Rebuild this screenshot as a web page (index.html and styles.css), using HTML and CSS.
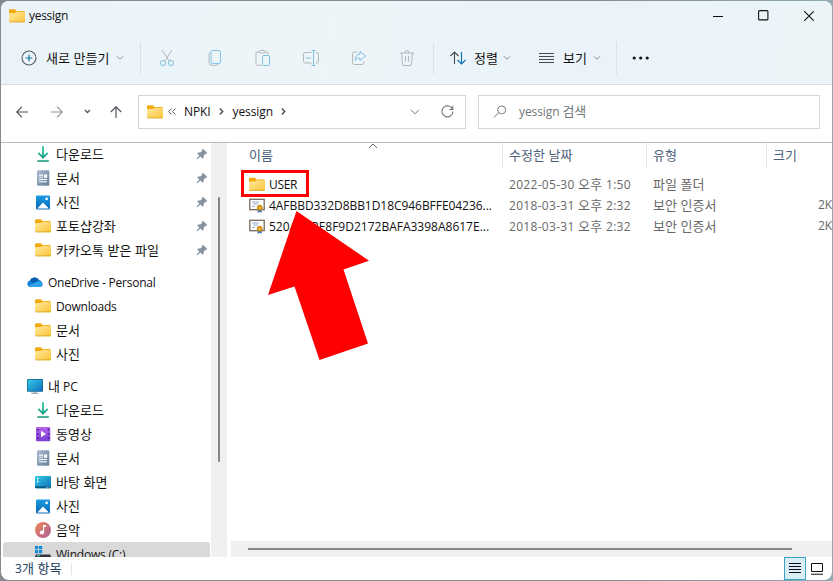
FILE: index.html
```html
<!DOCTYPE html>
<html lang="ko">
<head>
<meta charset="utf-8">
<title>yessign</title>
<link rel="stylesheet" href="styles.css">
</head>
<body>
<svg class="defs" width="0" height="0">
  <defs>
    <linearGradient id="gFolder" x1="0" y1="0" x2="1" y2="1"><stop offset="0" stop-color="#ffe9a3"/><stop offset="1" stop-color="#fbc536"/></linearGradient>
    <linearGradient id="gDown" x1="0" y1="0" x2="0" y2="1"><stop offset="0" stop-color="#28c3a0"/><stop offset="1" stop-color="#109477"/></linearGradient>
    <linearGradient id="gDoc" x1="0" y1="0" x2="1" y2="1"><stop offset="0" stop-color="#a9bace"/><stop offset="1" stop-color="#667f9b"/></linearGradient>
    <linearGradient id="gPic" x1="0" y1="0" x2="0" y2="1"><stop offset="0" stop-color="#199ae0"/><stop offset="1" stop-color="#0a67ba"/></linearGradient>
    <linearGradient id="gPc" x1="0" y1="0" x2="1" y2="1"><stop offset="0" stop-color="#35cbe4"/><stop offset="1" stop-color="#0b70bd"/></linearGradient>
    <linearGradient id="gVid" x1="0" y1="0" x2="0" y2="1"><stop offset="0" stop-color="#b463e8"/><stop offset="1" stop-color="#7c3fd4"/></linearGradient>
    <linearGradient id="gMus" x1="0" y1="0" x2="1" y2="1"><stop offset="0" stop-color="#ef8a52"/><stop offset="1" stop-color="#ab5b9e"/></linearGradient>
    <symbol id="folder" viewBox="0 0 16 14"><path d="M0 1.400Q0 .3 1.100.3h4.400q.7 0 1.200.6l1 1.200h7.200q1.100 0 1.100 1v3H0z" fill="#f2a90c"/><path d="M0 5q0-.9 1-.9h4.400q.6 0 1.100-.5l.8-.8h7.700q1 0 1 1v8.400q0 1-1 1H1q-1 0-1-1z" fill="url(#gFolder)"/><path d="M.4 12.900h15.200" stroke="#d69b20" stroke-width=".7"/></symbol>
    <symbol id="download" viewBox="0 0 16 16"><path d="M7.100.3h1.800v9.200l3.200-3.200 1.200 1.300L8 12.900 2.700 7.600l1.200-1.300 3.200 3.200zM2.200 14.300h11.600v1.500H2.200z" fill="url(#gDown)"/></symbol>
    <symbol id="doc" viewBox="0 0 16 16"><rect x="2" y=".3" width="12.300" height="15.400" rx="1" fill="url(#gDoc)"/><path d="M4 5.100h4M4 7.300h4M4 9.500h8M4 11.700h8" stroke="#fff" stroke-width="1.100"/><rect x="9" y="4.500" width="3.200" height="3.200" fill="#fff"/></symbol>
    <symbol id="picture" viewBox="0 0 16 16"><rect x="1" y="1.500" width="14" height="14" rx="1" fill="url(#gPic)"/><path d="M2.300 14.500 8 8.500l6 6z" fill="#fff"/><circle cx="11.600" cy="4.900" r="1.300" fill="#fff"/></symbol>
    <symbol id="onedrive" viewBox="0 0 16 11"><path d="M3.300 10.500A3.300 3.300 0 0 1 3 4a5 5 0 0 1 9-.4A3.600 3.600 0 0 1 13 10.500z" fill="#1580d4"/><path d="M3 4a5 5 0 0 1 9-.5L6 7z" fill="#0a5cb0"/><path d="M1.500 9.500 9.800 5.200q5.800-.3 6.100 2.700-.1 2.500-2.700 2.700H3.500q-1.300 0-2-1.100" fill="#2da3ec"/></symbol>
    <symbol id="pc" viewBox="0 0 16 16"><path d="M7.300 13.500h1.400v1.300h2.600v.9H4.200v-.9h3.100z" fill="#84929d"/><rect y="1" width="16" height="12.800" rx="1" fill="#17618f"/><rect x=".7" y="1.700" width="14.600" height="11.400" fill="url(#gPc)"/></symbol>
    <symbol id="video" viewBox="0 0 16 16"><rect x="1" y="1" width="14.300" height="14.300" rx="1" fill="url(#gVid)"/><path d="M6 4.800v6.400l5-3.200z" fill="#fff"/><path d="M2.900 3v11M13.500 3v11" stroke="#4c168c" stroke-width="1.500" stroke-dasharray="1.600 2.600"/></symbol>
    <symbol id="desktop" viewBox="0 0 16 16"><rect y="2" width="16" height="12.200" rx="1" fill="url(#gPc)"/><path d="M0 12.200h16v1q0 1-1 1H1q-1 0-1-1z" fill="#0a5a88"/><path d="M2 4.600h1.500M2 7.600h1.500" stroke="#fff" stroke-width="1.500"/><path d="M11 13.200h3.500" stroke="#d9f3ff" stroke-width=".8" stroke-dasharray=".8 .6"/></symbol>
    <symbol id="music" viewBox="0 0 16 16"><circle cx="8" cy="8" r="8" fill="url(#gMus)"/><path d="M8 3h3v2H9.100v5.500a2.100 1.900 0 1 1-1.100-1.700z" fill="#fff"/></symbol>
    <symbol id="drive" viewBox="0 0 16 16"><path d="M0 0h3.200v3.200H0zM4 0h3.200v3.200H4zM0 4h3.200v3.200H0zM4 4h3.200v3.200H4z" fill="#128ad5"/><path d="M1 8.500h14l1 2v4H0v-4z" fill="#343a3f"/><path d="M2 9.800h3" stroke="#3cd6b4"/></symbol>
    <symbol id="pin" viewBox="0 0 12 12"><path d="m7 .7 4.300 4.200-1.100 1-.6-.1-2 2v2.100l-.9.9-2.200-2.200L1 11.500l-.5-.5 2.800-3.500-2.100-2.100.9-1h2.200l2.100-2-.3-.7z" fill="#85919c"/></symbol>
    <symbol id="chev" viewBox="0 0 8 6"><path d="m1 1.300 3 3 3-3" fill="none" stroke="currentColor"/></symbol>
    <symbol id="cert" viewBox="0 0 16 15"><rect x=".8" y="1.300" width="14.400" height="10.400" fill="#fff" stroke="#776b5c" stroke-width="1.300"/><path d="M3 4h7M4 6h5M3 8.500h3" stroke="#8ba4c2" stroke-width=".9"/><path d="M8.700 11v4l1.900-1.500 1.900 1.500v-4" fill="#245dba"/><circle cx="10.700" cy="9.700" r="2.900" fill="#cf9318"/><circle cx="10.700" cy="9.700" r="1" fill="#f3c84c"/></symbol>
  </defs>
</svg>
<div class="window">
  <header class="top">
    <div class="titlebar">
      <svg class="folder"><use href="#folder"/></svg><span class="title">yessign</span>
      <div class="controls">
        <svg width="10" height="10"><path d="M0 5.500h10" stroke="#111"/></svg>
        <svg width="11" height="11"><rect x=".6" y=".6" width="9.300" height="9.300" rx="1" fill="none" stroke="#111" stroke-width="1.100"/></svg>
        <svg width="10" height="10"><path d="m.2.2 9.600 9.600m0-9.600L.2 9.800" stroke="#111" stroke-width="1.100"/></svg>
      </div>
    </div>
    <div class="toolbar">
      <button class="tool new"><svg width="16" height="16" fill="none"><circle cx="8" cy="8" r="7" stroke="#555d63" stroke-width="1.100"/><path d="M8 4.700v6.600M4.700 8h6.600" stroke="#1272a8" stroke-width="1.200"/></svg><span class="ko">새로 만들기</span><svg class="chev"><use href="#chev"/></svg></button>
      <i class="sep"></i>
      <div class="actions">
        <svg viewBox="0 0 16 16"><path d="m3 0 7.500 11.500M13 0 5.500 11.500" stroke="#b2b9bd"/><circle cx="4" cy="13" r="2.600" stroke="#7fc0e5"/><circle cx="12" cy="13" r="2.600" stroke="#7fc0e5"/></svg>
        <svg viewBox="0 0 16 16"><path d="M3.500 2.500q-1.500.4-1.500 2V12q0 3.300 3.300 3.300h3.500q1.600 0 2-1.300" stroke="#b2b9bd"/><rect x="4" y=".5" width="9.500" height="13" rx="1.600" stroke="#7fc0e5"/></svg>
        <svg viewBox="0 0 16 16"><path d="M5 2H2Q1 2 1 3v11.300q0 1 1 1h4.500M10 2h2q1 0 1 1v1.500" stroke="#b2b9bd"/><rect x="4.500" y=".5" width="6" height="2.500" rx="1" stroke="#b2b9bd"/><rect x="7.500" y="5.500" width="7" height="10" rx="1" stroke="#7fc0e5"/></svg>
        <svg viewBox="0 0 16 16"><path d="M8.500 2.500H2.200Q.5 2.500.5 4.200v7.100q0 1.700 1.700 1.700h6.300m4-10.500h1.300q1.700 0 1.700 1.700v7.100q0 1.700-1.700 1.700h-1.300" stroke="#b2b9bd"/><path d="M8.500.5h4m-2 0v15m-2 0h4M3 8h5" stroke="#7fc0e5"/></svg>
        <svg viewBox="0 0 16 16"><path d="M6 2H3Q1.500 2 1.500 3.500v9q0 2 2 2H11q2 0 2-2V11" stroke="#b2b9bd"/><path d="M9 1.300 14.500 6 9 10.500V8q-3-.5-5 2.500Q4.500 4 9 4z" stroke="#7fc0e5"/></svg>
        <svg viewBox="0 0 16 16"><path d="M1 3h14M2.500 3l1 11q.1 1.500 1.500 1.500h6q1.400 0 1.500-1.500l1-11M6 3V2q0-1.400 2-1.400T10 2v1M6.500 6v6M9.500 6v6" stroke="#b2b9bd"/></svg>
      </div>
      <i class="sep s2"></i>
      <button class="tool sort"><svg width="16" height="14" fill="none"><path d="M4.500 13V1M.5 5l4-4 4 4" stroke="#444c52" stroke-width="1.100"/><path d="M11.500 1v12m-4-4 4 4 4-4" stroke="#1172b8" stroke-width="1.200"/></svg><span class="ko">정렬</span><svg class="chev"><use href="#chev"/></svg></button>
      <button class="tool view"><svg width="15" height="11"><path d="M0 .5h15M0 3.500h15M0 6.500h15M0 9.500h15" stroke="#444c52"/></svg><span class="ko">보기</span><svg class="chev"><use href="#chev"/></svg></button>
      <i class="sep s3"></i>
      <svg class="more" width="18" height="4"><circle cx="2.200" cy="2" r="1.600"/><circle cx="8.700" cy="2" r="1.600"/><circle cx="15.200" cy="2" r="1.600"/></svg>
    </div>
  </header>
  <nav class="navbar">
    <svg class="back" width="12" height="12" fill="none"><path d="M12 6H.8M6 .7.800 6 6 11.300" stroke="#50565b" stroke-width="1.200"/></svg>
    <svg class="fwd" width="12" height="12" fill="none"><path d="M0 6h11.200M6 .7 11.200 6 6 11.300" stroke="#94999c" stroke-width="1.200"/></svg>
    <svg class="recent" width="7" height="5" fill="none"><path d="m1 1 2.500 2.500L6 1" stroke="#50565b" stroke-width="1.300"/></svg>
    <svg class="up" width="12" height="12" fill="none"><path d="M6 12V.8M.8 6 6 .8 11.200 6" stroke="#50565b" stroke-width="1.200"/></svg>
    <div class="address">
      <svg class="folder"><use href="#folder"/></svg>
      <svg class="dbl" width="8" height="7" fill="none"><path d="m3.800.5-3 3 3 3m3.700-6-3 3 3 3" stroke="#50565b"/></svg>
      <span class="c1">NPKI</span><svg class="arr" width="5" height="7" fill="none"><path d="m.8.5 3 3-3 3" stroke="#444" stroke-width="1.300"/></svg>
      <span class="c2">yessign</span><svg class="arr" width="5" height="7" fill="none"><path d="m.8.5 3 3-3 3" stroke="#444" stroke-width="1.300"/></svg>
      <svg class="drop" width="10" height="6" fill="none"><path d="m1 .8 4 4 4-4" stroke="#6f7478"/></svg>
      <svg class="refresh" width="13" height="13" fill="none"><path d="M11.600 4.300A5.500 5.500 0 1 0 12 6.500M11.800.7v3.800H8.200" stroke="#6f7478" stroke-width="1.100"/></svg>
    </div>
    <div class="search"><svg width="14" height="13" fill="none"><circle cx="8.700" cy="4.900" r="4" stroke="#777d81"/><path d="M5.700 7.900.8 12.400" stroke="#777d81"/></svg><span>yessign <b class="ko">검색</b></span></div>
  </nav>
  <main class="content">
    <aside class="side">
      <div class="tree">
        <div class="item"><svg><use href="#download"/></svg><span class="ko">다운로드</span><svg class="pin"><use href="#pin"/></svg></div>
        <div class="item"><svg><use href="#doc"/></svg><span class="ko">문서</span><svg class="pin"><use href="#pin"/></svg></div>
        <div class="item"><svg><use href="#picture"/></svg><span class="ko">사진</span><svg class="pin"><use href="#pin"/></svg></div>
        <div class="item"><svg><use href="#folder"/></svg><span class="ko">포토샵강좌</span><svg class="pin"><use href="#pin"/></svg></div>
        <div class="item"><svg><use href="#folder"/></svg><span class="ko">카카오톡 받은 파일</span><svg class="pin"><use href="#pin"/></svg></div>
        <div class="item root"><svg><use href="#onedrive"/></svg><span class="latin">OneDrive - Personal</span></div>
        <div class="item"><svg><use href="#folder"/></svg><span class="latin">Downloads</span></div>
        <div class="item"><svg><use href="#folder"/></svg><span class="ko">문서</span></div>
        <div class="item"><svg><use href="#folder"/></svg><span class="ko">사진</span></div>
        <div class="item root"><svg><use href="#pc"/></svg><span><b class="ko">내</b> PC</span></div>
        <div class="item"><svg><use href="#download"/></svg><span class="ko">다운로드</span></div>
        <div class="item"><svg><use href="#video"/></svg><span class="ko">동영상</span></div>
        <div class="item"><svg><use href="#doc"/></svg><span class="ko">문서</span></div>
        <div class="item"><svg><use href="#desktop"/></svg><span class="ko">바탕 화면</span></div>
        <div class="item"><svg><use href="#picture"/></svg><span class="ko">사진</span></div>
        <div class="item"><svg><use href="#music"/></svg><span class="ko">음악</span></div>
        <div class="item selected"><svg><use href="#drive"/></svg><span class="latin">Windows (C:)</span></div>
      </div>
      <div class="vscroll"><i></i></div>
    </aside>
    <section class="files">
      <div class="row head ko"><span class="name">이름</span><span>수정한 날짜</span><span>유형</span><span>크기</span><svg class="asc" width="10" height="6" fill="none"><path d="m1 5 4-4 4 4" stroke="#666"/></svg></div>
      <div class="rows">
        <div class="row"><span class="name"><svg><use href="#folder"/></svg><em class="user">USER</em></span><span class="date">2022-05-30 <b class="ko">오후</b> 1:50</span><span class="ko">파일 폴더</span><span></span></div>
        <div class="row"><span class="name"><svg><use href="#cert"/></svg><em class="n1">4AFBBD332D8BB1D18C946BFFE04236...</em></span><span class="date">2018-03-31 <b class="ko">오후</b> 2:32</span><span class="ko">보안 인증서</span><span class="size">2KB</span></div>
        <div class="row"><span class="name"><svg><use href="#cert"/></svg><em class="n2">520A10BE8F9D2172BAFA3398A8617E...</em></span><span class="date">2018-03-31 <b class="ko">오후</b> 2:32</span><span class="ko">보안 인증서</span><span class="size">2KB</span></div>
      </div>
      <div class="hscroll"><i></i></div>
      <div class="highlight"></div>
      <svg class="pointer" width="102" height="150"><path d="M28.500 0 101 49.700 75.500 58.500 100 132.500 51.500 149 26.500 75.500 0 84z" fill="#f00"/></svg>
    </section>
  </main>
  <footer class="status">
    <span>3<b class="ko">개 항목</b></span><i></i>
    <div class="modes"><div class="on"><svg width="12" height="11"><path d="M0 .5h12M0 3.500h12M0 6.500h12M0 9.500h12" stroke="#111"/></svg></div><svg width="12" height="12" fill="none"><path d="M.5.5h11v8H.5zM0 11.200h12" stroke="#111"/></svg></div>
  </footer>
</div>
</body>
</html>
```
FILE: styles.css
```css
* { box-sizing: border-box; }
body {
  margin: 0; width: 833px; height: 581px; overflow: hidden; padding: 1px;
  background: linear-gradient(90deg, #858b90 0, #858b90 70%, #8faab3 100%);
  font: 12px/20px "Open Sans", "Noto Sans CJK KR", sans-serif; color: #111;
}
svg { display: block; flex: none; }
.defs { position: absolute; }
b, em { font-weight: 400; font-style: normal; }
.ko { font-family: "Noto Sans CJK KR", sans-serif; font-size: 13px; font-weight: 400; }
.window { display: flex; flex-direction: column; width: 831px; height: 579px; border-radius: 8px; overflow: hidden; background: #fff; }
.top { height: 84px; flex: none; background: linear-gradient(100deg, #eaf4f8, #edf5f8 40%, #e9f3f9 70%, #ecf4f7); border-bottom: 1px solid #d5dcdf; }
.titlebar { display: flex; height: 29px; align-items: center; padding-left: 8px; }
.folder { width: 16px; height: 14px; }
.title { margin-left: 4px; letter-spacing: -.3px; }
.controls { display: flex; align-items: center; gap: 35px; margin: 0 18px 0 auto; }
.toolbar { display: flex; align-items: center; height: 54px; padding: 2px 0 0 20px; }
.tool { display: flex; align-items: center; border: 0; padding: 0; background: none; color: #111; }
.tool .ko { line-height: 20px; }
.chev { width: 8px; height: 6px; color: #858b8f; }
.new { width: 119px; gap: 9px; }
.new .chev { margin-left: -2px; }
.sep { width: 1px; height: 32px; background: #dae2e5; }
.actions { display: flex; gap: 32px; margin-left: 18px; }
.actions svg { width: 16px; height: 16px; fill: none; }
.s2 { margin-left: 18px; }
.sort { margin-left: 16px; gap: 8px; width: 89px; }
.view { gap: 9px; width: 77px; }
.sort .chev, .view .chev { margin-left: -3px; }
.more { margin-left: 15px; fill: #111; }
.navbar { display: flex; align-items: center; height: 58px; flex: none; padding: 0 12px 4px 15px; border-bottom: 1px solid #bdbdbd; }
.fwd { margin-left: 23px; }
.recent { margin-left: 21px; }
.up { margin-left: 19px; }
.address, .search { display: flex; align-items: center; height: 34px; border: 1px solid #d6d6d6; }
.address { width: 328px; margin-left: 16px; padding-left: 8px; }
.dbl { margin-left: 5px; }
.c1 { margin: 0 8px; letter-spacing: -.1px; }
.c2 { margin: 0 8px 0 9px; letter-spacing: -.1px; }
.drop { margin-left: auto; }
.refresh { margin: 0 11px 0 21px; }
.search { flex: 1; margin-left: 12px; padding-left: 14px; color: #72777b; }
.search span { margin-left: 12px; letter-spacing: -.1px; }
.content { display: flex; height: 414px; flex: none; }
.side { display: flex; width: 226px; flex: none; margin-right: 4px; }
.tree { flex: 1; overflow: hidden; padding: 0 1px 0 2px; margin-top: -1px; }
.item { display: flex; align-items: center; height: 24px; padding: 0 2px 0 32px; gap: 5px; white-space: nowrap; }
.item > svg { width: 16px; height: 16px; }
.item .pin { width: 12px; height: 12px; margin-left: auto; }
.item.root { margin-top: 8px; padding-left: 24px; }
.item .latin { letter-spacing: -.22px; padding-top: 1px; }
.item.selected { background: #d9d9d9; border-radius: 3px; }
.vscroll { width: 16px; background: #f0f0f0; padding: 54px 0 0 7px; }
.vscroll i { display: block; width: 2px; height: 265px; background: #858585; border-radius: 1px; }
.files { position: relative; display: flex; flex-direction: column; flex: 1; min-width: 0; }
.row { display: grid; grid-template-columns: 272px 144px 120px 1fr; height: 21px; line-height: 21px; color: #686868; white-space: nowrap; }
.row > span { padding-left: 6px; }
.row > .name { display: flex; align-items: center; gap: 4px; padding-left: 18px; color: #111; }
.name svg { width: 16px; height: 15px; }
.head { height: 25px; line-height: 23px; color: #4c607a; }
.head > span { border-right: 1px solid #e5e5e5; }
.head > span:nth-child(4) { border: 0; }
.head > .name { color: #4c607a; padding-bottom: 2px; }
.user { letter-spacing: -.3px; }
.n1 { letter-spacing: -.05px; }
.date { letter-spacing: .3px; }
.asc { position: absolute; left: 137px; top: 0; }
.rows { padding-top: 5px; flex: 1; }
.row > .size { padding-left: 51px; overflow: hidden; }
.hscroll { height: 16px; background: #efefef; padding: 7px 0 0 17px; }
.hscroll i { display: block; width: 544px; height: 2px; background: #858585; }
.highlight { position: absolute; left: 10px; top: 27px; width: 68px; height: 27px; border: 3px solid #f00; }
.pointer { position: absolute; left: 37px; top: 68px; }
.status { display: flex; align-items: center; flex: 1; padding-left: 14px; color: #26415e; }
.status > i { width: 1px; height: 12px; background: #e5e5e5; margin-left: 10px; }
.modes { display: flex; align-items: center; gap: 5px; margin: 0 9px 0 auto; }
.modes .on { display: flex; align-items: center; justify-content: center; width: 22px; height: 23px; background: #d8edf6; border: 1px solid #38a6c4; }
```
